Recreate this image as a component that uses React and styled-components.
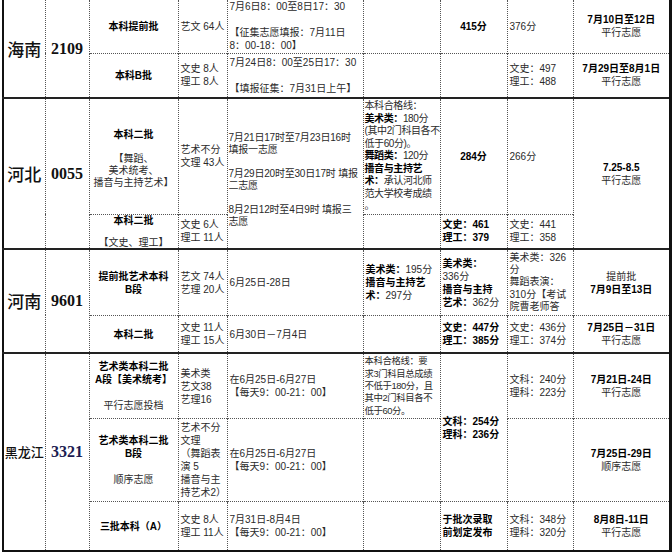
import React from 'react'
import styled, { createGlobalStyle } from 'styled-components'

const GlobalStyle = createGlobalStyle`
  html, body {
    margin: 0;
    padding: 0;
    background: #fff;
  }
  body {
    font-family: "Liberation Sans", "Noto Sans CJK SC", sans-serif;
    color: #2a2a2a;
  }
`

const Page = styled.div`
  width: 672px;
  height: 556px;
  padding-left: 2px;
  box-sizing: border-box;
  overflow: hidden;
`

const Table = styled.table`
  width: 670px;
  border-collapse: collapse;
  table-layout: fixed;
  border-left: 2px solid #111;
  border-right: 3px solid #111;
  border-bottom: 2px solid #111;
`

const Col = styled.col`
  width: ${p => p.$w}px;
`

const Row = styled.tr`
  height: ${p => p.$h}px;
  & > td {
    border-top: ${p => (p.$first ? 'none' : p.$group ? '2px solid #222' : '1px dotted #555')};
  }
`

const Cell = styled.td`
  border-left: 1px dotted #555;
  border-right: 1px dotted #555;
  padding: 0 ${p => (p.$ls ? 1 : 2)}px;
  font-size: ${p => p.$fs || 10}px;
  line-height: ${p => p.$lh || 13}px;
  letter-spacing: ${p => (p.$ls ? `${p.$ls}px` : 'normal')};
  vertical-align: ${p => p.$valign || 'middle'};
  text-align: ${p => p.$align || 'left'};
  font-weight: ${p => (p.$bold ? 700 : 400)};
  color: ${p => (p.$bold ? '#000' : '#2a2a2a')};
  white-space: nowrap;
  overflow: hidden;
`

const Province = styled(Cell)`
  font-family: "Noto Sans CJK SC", sans-serif;
  font-size: ${p => p.$size || 17}px;
  line-height: 20px;
  font-weight: 500;
  text-align: center;
  color: #111;
  padding: 0;
`

const Code = styled(Cell)`
  font-family: "Liberation Serif", "Times New Roman", serif;
  font-size: 16px;
  line-height: 20px;
  font-weight: 700;
  text-align: center;
  color: ${p => p.$color || '#111'};
`

const B = styled.span`
  font-weight: 700;
  color: #000;
`

const Shift = styled.div`
  padding-top: ${p => p.$top || 0}px;
`

export default function App() {
  return (
    <Page>
      <GlobalStyle />
      <Table>
        <colgroup>
          <Col $w={42} />
          <Col $w={44} />
          <Col $w={89} />
          <Col $w={49} />
          <Col $w={136} />
          <Col $w={77} />
          <Col $w={67} />
          <Col $w={66} />
          <Col $w={97.5} />
        </colgroup>
        <tbody>
          {/* 海南 */}
          <Row $h={53} $first>
            <Province rowSpan={2}>海南</Province>
            <Code rowSpan={2}>2109</Code>
            <Cell $align="center" $bold>本科提前批</Cell>
            <Cell>艺文 64人</Cell>
            <Cell>
              7月6日8：00至8日17：30<br /><br />
              【征集志愿填报：7月11日<br />
              8：00-18：00】
            </Cell>
            <Cell />
            <Cell $align="center" $bold>415分</Cell>
            <Cell>376分</Cell>
            <Cell $align="center"><B>7月10日至12日</B><br />平行志愿</Cell>
          </Row>
          <Row $h={45}>
            <Cell $align="center" $bold>本科B批</Cell>
            <Cell>文史 8人<br />理工 8人</Cell>
            <Cell>
              7月24日8：00至25日17：30<br /><br />
              【填报征集：7月31日上午】
            </Cell>
            <Cell />
            <Cell />
            <Cell>文史：497<br />理工：488</Cell>
            <Cell $align="center"><B>7月29日至8月1日</B><br />平行志愿</Cell>
          </Row>

          {/* 河北 */}
          <Row $h={116} $group>
            <Province rowSpan={2}>河北</Province>
            <Code rowSpan={2}>0055</Code>
            <Cell $align="center" $lh={12}>
              <Shift $top={6}>
                <B>本科二批</B><br /><br />
                【舞蹈、<br />
                美术统考、<br />
                播音与主持艺术】
              </Shift>
            </Cell>
            <Cell>艺术不分<br />文理 43人</Cell>
            <Cell rowSpan={2} $lh={12} $ls={-0.2}>
              <Shift $top={12}>
                7月21日17时至7月23日16时<br />
                填报一志愿<br /><br />
                7月29日20时至30日17时 填报<br />
                二志愿<br /><br />
                8月2日12时至4日9时 填报三<br />
                志愿
              </Shift>
            </Cell>
            <Cell $lh={12.5} $ls={-0.4}>
              本科合格线：<br />
              <B>美术类：</B>180分<br />
              (其中2门科目各不<br />
              低于60分)。<br />
              <B>舞蹈类：</B>120分<br />
              <B>播音与主持艺</B><br />
              <B>术：</B>承认河北师<br />
              范大学校考成绩<br />
              。
            </Cell>
            <Cell $align="center" $bold>284分</Cell>
            <Cell>266分</Cell>
            <Cell rowSpan={2} $align="center"><B>7.25-8.5</B><br />平行志愿</Cell>
          </Row>
          <Row $h={35}>
            <Cell $align="center" $lh={11.3}>
              <B>本科二批</B><br /><br />
              【文史、理工】
            </Cell>
            <Cell>文史 6人<br />理工 11人</Cell>
            <Cell />
            <Cell $bold>文史：461<br />理工：379</Cell>
            <Cell>文史：441<br />理工：358</Cell>
          </Row>

          {/* 河南 */}
          <Row $h={66} $group>
            <Province rowSpan={2}>河南</Province>
            <Code rowSpan={2}>9601</Code>
            <Cell $align="center" $bold>提前批艺术本科<br />B段</Cell>
            <Cell>艺文 74人<br />艺理 20人</Cell>
            <Cell>6月25日-28日</Cell>
            <Cell>
              <B>美术类：</B>195分<br />
              <B>播音与主持艺</B><br />
              <B>术：</B>297分
            </Cell>
            <Cell>
              <B>美术类：</B><br />
              336分<br />
              <B>播音与主持</B><br />
              <B>艺术：</B>362分
            </Cell>
            <Cell $lh={12.4}>
              美术类：326<br />
              分<br />
              舞蹈表演：<br />
              310分【考试<br />
              院曹老师答
            </Cell>
            <Cell $align="center">提前批<br /><B>7月9日至13日</B></Cell>
          </Row>
          <Row $h={38}>
            <Cell $align="center" $bold>本科二批</Cell>
            <Cell>文史 11人<br />理工 15人</Cell>
            <Cell>6月30日－7月4日</Cell>
            <Cell />
            <Cell $bold>文史：447分<br />理工：385分</Cell>
            <Cell>文史：436分<br />理工：374分</Cell>
            <Cell $align="center"><B>7月25日－31日</B><br />平行志愿</Cell>
          </Row>

          {/* 黑龙江 */}
          <Row $h={65} $group>
            <Province rowSpan={3} $size={13}>黑龙江</Province>
            <Code rowSpan={3} $color="#1c1c52">3321</Code>
            <Cell $align="center">
              <B>艺术类本科二批<br />A段【美术统考】</B><br /><br />
              平行志愿投档
            </Cell>
            <Cell>美术类<br />艺文38<br />艺理16</Cell>
            <Cell>在6月25日-6月27日<br />【每天9：00-21：00】</Cell>
            <Cell $lh={12.4} $fs={9.4} $ls={-0.4}>
              本科合格线：要<br />
              求3门科目总成绩<br />
              不低于180分，且<br />
              其中2门科目各不<br />
              低于60分。
            </Cell>
            <Cell rowSpan={2} $bold>文科：254分<br />理科：236分</Cell>
            <Cell>文科：240分<br />理科：223分</Cell>
            <Cell $align="center"><B>7月21日-24日</B><br />平行志愿</Cell>
          </Row>
          <Row $h={83}>
            <Cell $align="center">
              <B>艺术类本科二批<br />B段</B><br /><br />
              顺序志愿
            </Cell>
            <Cell>艺术不分<br />文理<br />（舞蹈表<br />演 5<br />播音与主<br />持艺术2）</Cell>
            <Cell>在6月25日-6月27日<br />【每天9：00-21：00】</Cell>
            <Cell />
            <Cell />
            <Cell $align="center"><B>7月25日-29日</B><br />顺序志愿</Cell>
          </Row>
          <Row $h={50}>
            <Cell $align="center" $bold>三批本科（A）</Cell>
            <Cell>文史 8人<br />理工 11人</Cell>
            <Cell>7月31日-8月4日<br />【每天9：00-21：00】</Cell>
            <Cell />
            <Cell $bold>于批次录取<br />前划定发布</Cell>
            <Cell>文科：348分<br />理科：320分</Cell>
            <Cell $align="center"><B>8月8日-11日</B><br />平行志愿</Cell>
          </Row>
        </tbody>
      </Table>
    </Page>
  )
}
